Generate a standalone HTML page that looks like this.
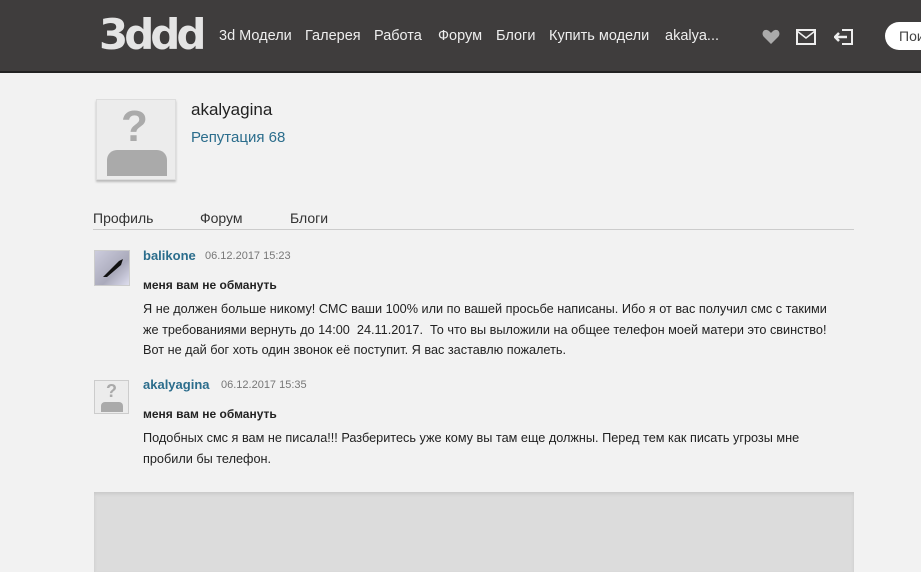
<!DOCTYPE html><html><head><meta charset="utf-8"><style>
*{margin:0;padding:0;box-sizing:border-box}
body{width:921px;height:561px;overflow:hidden;background:#f2f2f2;font-family:"Liberation Sans",Arial,sans-serif;position:relative;color:#222}
.a{position:absolute;white-space:nowrap}
#hd{position:absolute;left:0;top:0;width:921px;height:73px;background:#3f3d3d;border-bottom:2px solid #222}
.nv{color:#eee;font-size:14.5px;top:28px}
.nm{color:#2b6d8c;font-weight:bold;font-size:13px}
.dt{color:#777;font-size:11px}
.tt{font-weight:bold;font-size:12px}
.bd{font-size:12.7px;line-height:20.5px}
</style></head><body>
<div id="hd">
<div class="a" style="left:99px;top:10px;font-size:42px;font-weight:bold;color:#e4e4e4;letter-spacing:-4px;font-family:'DejaVu Sans',sans-serif">3ddd</div>
<div class="a nv" style="left:219px">3d Модели</div>
<div class="a nv" style="left:305px">Галерея</div>
<div class="a nv" style="left:374px">Работа</div>
<div class="a nv" style="left:438px">Форум</div>
<div class="a nv" style="left:496px">Блоги</div>
<div class="a nv" style="left:549px">Купить модели</div>
<div class="a nv" style="left:665px">akalya...</div>
<svg class="a" style="left:762px;top:29px" width="18" height="16" viewBox="0 0 18 16"><path d="M9 15 L2 8 C-1 5 1 0 5 1 C7 1.5 8 3 9 4 C10 3 11 1.5 13 1 C17 0 19 5 16 8 Z" fill="#aaa"/></svg>
<svg class="a" style="left:796px;top:29px" width="20" height="16" viewBox="0 0 20 16"><rect x="1" y="1" width="18" height="14" fill="none" stroke="#eee" stroke-width="2"/><path d="M1 2 L10 9 L19 2" fill="none" stroke="#eee" stroke-width="1.5"/></svg>
<svg class="a" style="left:834px;top:28px" width="20" height="18" viewBox="0 0 20 18"><path d="M8 2 H18 V16 H8" fill="none" stroke="#eee" stroke-width="2"/><path d="M1 9 H13 M5 5 L1 9 L5 13" fill="none" stroke="#eee" stroke-width="2.5"/></svg>
<div class="a" style="left:885px;top:22px;width:60px;height:28px;background:#fff;border-radius:14px;font-size:14px;color:#444;padding:6px 0 0 14px">Пои</div>
</div>
<div class="a" style="left:96px;top:99px;width:80px;height:81px;background:#ececec;border:1px solid #ddd;box-shadow:0 2px 2px #bbb">
<div class="a" style="left:24px;top:2px;font-size:44px;font-weight:bold;color:#aaa">?</div>
<div class="a" style="left:10px;top:50px;width:60px;height:26px;background:#aaa;border-radius:10px 10px 0 0"></div></div>
<div class="a" style="left:191px;top:100px;font-size:17px;color:#222">akalyagina</div>
<div class="a" style="left:191px;top:129px;font-size:15px;color:#2b6d8c">Репутация 68</div>
<div class="a" style="left:93px;top:210px;font-size:14px;color:#333">Профиль</div>
<div class="a" style="left:200px;top:210px;font-size:14px;color:#333">Форум</div>
<div class="a" style="left:290px;top:210px;font-size:14px;color:#333">Блоги</div>
<div class="a" style="left:93px;top:229px;width:761px;height:1px;background:#ccc"></div>

<div class="a" style="left:94px;top:250px;width:36px;height:36px;background:linear-gradient(135deg,#ccd 0%,#aab 60%,#dde 100%);border:1px solid #ccc"><svg width="34" height="34"><path d="M8 26 L24 10 L28 8 L26 14 L12 26 Z" fill="#111"/></svg></div>
<div class="a nm" style="left:143px;top:248px">balikone</div>
<div class="a dt" style="left:205px;top:250px">06.12.2017 15:23</div>
<div class="a tt" style="left:143px;top:278px">меня вам не обмануть</div>
<div class="a bd" style="left:143px;top:299px">Я не должен больше никому! СМС ваши 100% или по вашей просьбе написаны. Ибо я от вас получил смс с такими<br>же требованиями вернуть до 14:00&nbsp; 24.11.2017.&nbsp; То что вы выложили на общее телефон моей матери это свинство!<br>Вот не дай бог хоть один звонок её поступит. Я вас заставлю пожалеть.</div>

<div class="a" style="left:94px;top:380px;width:35px;height:34px;background:#ececec;border:1px solid #ccc">
<div class="a" style="left:11px;top:0px;font-size:18px;font-weight:bold;color:#aaa">?</div>
<div class="a" style="left:6px;top:21px;width:22px;height:10px;background:#aaa;border-radius:4px 4px 0 0"></div></div>
<div class="a nm" style="left:143px;top:377px">akalyagina</div>
<div class="a dt" style="left:221px;top:379px">06.12.2017 15:35</div>
<div class="a tt" style="left:143px;top:407px">меня вам не обмануть</div>
<div class="a bd" style="left:143px;top:428px">Подобных смс я вам не писала!!! Разберитесь уже кому вы там еще должны. Перед тем как писать угрозы мне<br>пробили бы телефон.</div>

<div class="a" style="left:94px;top:492px;width:760px;height:80px;background:#dcdcdc;box-shadow:inset 0 2px 3px #c8c8c8"></div>
</body></html>
